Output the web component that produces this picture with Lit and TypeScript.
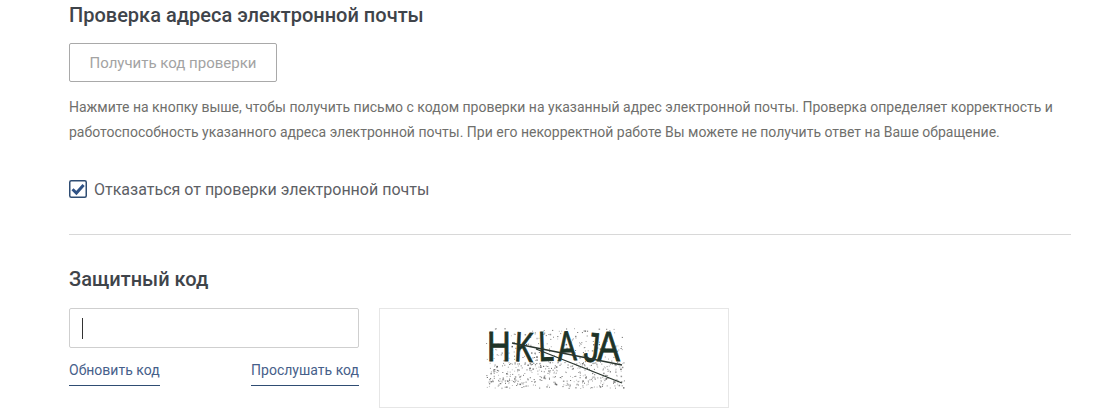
import { LitElement, html, css, svg } from "lit";
import { customElement } from "lit/decorators.js";

function noise() {
  let s = 12345;
  const r = () => (s = (s * 16807) % 2147483647) / 2147483647;
  const out = [];
  for (let i = 0; i < 900; i++) {
    const x = r() * 138;
    const y = r() * 60;
    if (y < 34 && r() > 0.35) continue;
    const g = Math.floor(90 + r() * 110);
    const size = r() < 0.2 ? 1.5 : 1;
    out.push(svg`<rect x=${x.toFixed(1)} y=${y.toFixed(1)} width=${size} height=${size} fill="rgb(${g},${g},${g})"></rect>`);
  }
  return out;
}

const LETTERS: [string, number, number, number][] = [
  ["H", 1, 0.78, 0],
  ["K", 28, 0.68, 3],
  ["L", 53, 0.66, -2],
  ["A", 72, 0.68, -3],
  ["J", 97, 0.72, 6],
  ["A", 111, 0.82, 0],
];

@customElement("app-root")
export class AppRoot extends LitElement {
  static styles = css`
    :host {
      display: block;
      width: 1095px;
      height: 419px;
      overflow: hidden;
      background: #fff;
      box-sizing: border-box;
      padding: 0 24px 0 69px;
      font-family: Roboto, "Liberation Sans", sans-serif;
      color: #6e6e6e;
    }
    h2 {
      margin: 0;
      font-size: 20px;
      line-height: 24px;
      font-weight: 500;
      color: #3f444a;
    }
    .first { padding-top: 3px; }
    .btn {
      display: block;
      margin-top: 16px;
      width: 208px;
      height: 39px;
      box-sizing: border-box;
      border: 1px solid #a9a9a9;
      border-radius: 2px;
      background: #fff;
      color: #a3a3a3;
      font: 400 15px Roboto, sans-serif;
      padding: 0;
    }
    .desc {
      margin: 13px 0 0;
      font-size: 14px;
      line-height: 25px;
      color: #6f6f6c;
    }
    .check {
      display: flex;
      align-items: center;
      gap: 7px;
      margin-top: 32px;
      height: 24px;
      font-size: 16px;
      color: #5d6065;
    }
    .box { width: 18px; height: 18px; display: block; flex: none; }
    hr {
      margin: 33px 0 0;
      border: 0;
      border-top: 1px solid #d8d8d8;
    }
    .sec { margin-top: 32px; }
    .row { display: flex; gap: 20px; margin-top: 17px; }
    .left { width: 290px; }
    .input {
      box-sizing: border-box;
      height: 40px;
      border: 1px solid #cfcfcf;
      border-radius: 2px;
      padding: 9px 12px;
    }
    .caret { width: 1px; height: 21px; background: #333; }
    .links { display: flex; justify-content: space-between; margin-top: 14px; }
    .links a {
      font-size: 14px;
      line-height: 17px;
      color: #46608a;
      padding-bottom: 6px;
      border-bottom: 1px solid #2f4d73;
    }
    .captcha {
      box-sizing: border-box;
      width: 350px;
      height: 100px;
      border: 1px solid #e6e6e6;
      padding: 4px 0 0 106px;
    }
    .captcha svg { display: block; }
    .cap-text {
      font-family: "Liberation Sans", sans-serif;
      font-size: 42px;
      fill: #1d3327;
      stroke: #1d3327;
      stroke-width: 0.9px;
    }
  `;

  render() {
    return html`
      <div class="first">
        <h2>Проверка адреса электронной почты</h2>
        <button class="btn">Получить код проверки</button>
        <p class="desc">Нажмите на кнопку выше, чтобы получить письмо с кодом проверки на указанный адрес электронной почты. Проверка определяет корректность и работоспособность указанного адреса электронной почты. При его некорректной работе Вы можете не получить ответ на Ваше обращение.</p>
        <label class="check">
          <svg class="box" viewBox="0 0 18 18">
            <rect x="0.75" y="0.75" width="16.5" height="16.5" rx="1.5" fill="#fff" stroke="#2f4d73" stroke-width="1.5"></rect>
            <path d="M3.5 9.2 L7.4 13 L14.6 5" fill="none" stroke="#2f5285" stroke-width="3"></path>
          </svg>
          Отказаться от проверки электронной почты
        </label>
      </div>
      <hr />
      <div class="sec">
        <h2>Защитный код</h2>
        <div class="row">
          <div class="left">
            <div class="input"><div class="caret"></div></div>
            <div class="links"><a>Обновить код</a><a>Прослушать код</a></div>
          </div>
          <div class="captcha">
            <svg width="150" height="90" viewBox="0 -15 150 90">
              ${noise()}
              ${LETTERS.map(
                ([c, x, sx, rot]) => svg`<text class="cap-text" transform="translate(${x} 33) rotate(${rot}) scale(${sx} 1)">${c}</text>`
              )}
              <path d="M26 15 L136 37 M50 21 L136 55" stroke="#2a352e" stroke-width="1.3" fill="none"></path>
            </svg>
          </div>
        </div>
      </div>
    `;
  }
}
